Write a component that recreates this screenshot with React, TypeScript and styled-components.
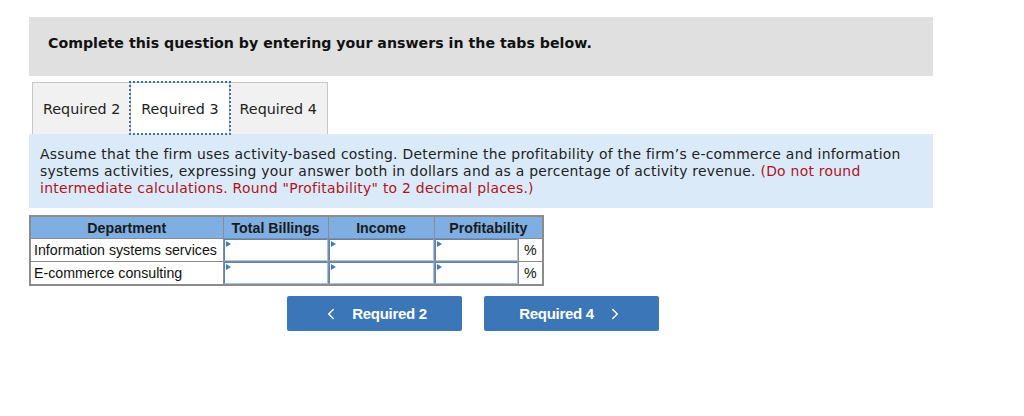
import { createGlobalStyle } from "styled-components";
import styled from "styled-components";
import { ChevronLeft, ChevronRight } from "lucide-react";

const GlobalStyle = createGlobalStyle`
  body { margin: 0; background: #fff; font-family: "DejaVu Sans", Verdana, sans-serif; color: #222; }
`;

const Page = styled.div`
  padding: 17px 0 0 29px; width: 904px;
`;

const Banner = styled.div`
  background: #e0e0e0; height: 59px; box-sizing: border-box;
  padding: 18px 0 0 19px;
  font-size: 14.2px; font-weight: bold; color: #111;
`;

const TabBar = styled.div`
  display: flex; margin: 6px 0 0 3px;
`;

const Tab = styled.div<{ $active?: boolean }>`
  height: 52px; box-sizing: border-box; padding: 0 10px;
  display: flex; align-items: center;
  font-size: 14.3px; color: #222;
  background: ${p => (p.$active ? "#fff" : "#f1f1f1")};
  border: 1px solid #c8c8c8; border-bottom: none;
  outline: ${p => (p.$active ? "2px dotted #3f6fb5" : "none")};
  outline-offset: -1px;
  position: relative; z-index: ${p => (p.$active ? 1 : 0)};
  & + & { margin-left: -1px; }
`;

const Info = styled.div`
  background: #dbeaf8; padding: 12px 11px 11px 11px;
  font-size: 13.9px; line-height: 17px; color: #222; letter-spacing: 0.27px;
`;

const Warn = styled.span`
  color: #b0121b;
`;

const Grid = styled.table`
  margin-top: 7px; border-collapse: collapse; table-layout: fixed; width: 513px;
  font-family: "Liberation Sans", Arial, sans-serif; font-size: 14.2px;
  border: 2px solid #8c8c8c;
`;

const Th = styled.th`
  height: 21px; padding: 0;
  background: #7eaee2; color: #1a1a1a; font-weight: bold;
  border: 1px solid #8c8c8c; text-align: center;
`;

const Label = styled.td`
  height: 22px; padding: 0 3px; white-space: nowrap; overflow: hidden;
  border: 1px solid #8c8c8c; color: #111;
`;

const InputCell = styled.td`
  padding: 0; border: 1px solid #8c8c8c; position: relative;
  &::before {
    content: ""; position: absolute; left: 2px; top: 2px;
    border-left: 5px solid #3f7bc8; border-top: 3px solid transparent; border-bottom: 3px solid transparent;
  }
`;

const Field = styled.input`
  display: block; width: 100%; height: 22px; box-sizing: border-box;
  border: 1px solid #4f86c9; border-right-color: #a9c2e2; border-bottom-color: #a9c2e2;
  background: #fff; margin: 0; padding: 0 4px; font: inherit;
`;

const Pct = styled.td`
  padding: 0; text-align: center;
  border: 1px solid #8c8c8c; color: #111;
`;

const Nav = styled.div`
  display: flex; gap: 22px; margin: 10px 0 0 258px;
`;

const NavButton = styled.button`
  width: 175px; height: 35px; border: none; border-radius: 2px;
  background: #3b76b9; color: #fff; cursor: pointer;
  display: flex; align-items: center; justify-content: center; gap: 12px;
  font-family: "Liberation Sans", Arial, sans-serif; font-size: 15px; font-weight: bold;
  letter-spacing: -0.3px;
`;

const rows = ["Information systems services", "E-commerce consulting"];

export default function App() {
  return (
    <Page>
      <GlobalStyle />
      <Banner>Complete this question by entering your answers in the tabs below.</Banner>
      <TabBar>
        <Tab>Required 2</Tab>
        <Tab $active>Required 3</Tab>
        <Tab>Required 4</Tab>
      </TabBar>
      <Info>
        Assume that the firm uses activity-based costing. Determine the profitability of the firm’s e-commerce and information
        systems activities, expressing your answer both in dollars and as a percentage of activity revenue.{" "}
        <Warn>(Do not round intermediate calculations. Round "Profitability" to 2 decimal places.)</Warn>
      </Info>
      <Grid>
        <colgroup>
          <col style={{ width: 193 }} />
          <col style={{ width: 105 }} />
          <col style={{ width: 106 }} />
          <col style={{ width: 84 }} />
          <col style={{ width: 25 }} />
        </colgroup>
        <thead>
          <tr>
            <Th>Department</Th>
            <Th>Total Billings</Th>
            <Th>Income</Th>
            <Th colSpan={2}>Profitability</Th>
          </tr>
        </thead>
        <tbody>
          {rows.map(r => (
            <tr key={r}>
              <Label>{r}</Label>
              <InputCell><Field /></InputCell>
              <InputCell><Field /></InputCell>
              <InputCell><Field /></InputCell>
              <Pct>%</Pct>
            </tr>
          ))}
        </tbody>
      </Grid>
      <Nav>
        <NavButton><ChevronLeft size={18} strokeWidth={2} />Required 2</NavButton>
        <NavButton>Required 4<ChevronRight size={18} strokeWidth={2} /></NavButton>
      </Nav>
    </Page>
  );
}
